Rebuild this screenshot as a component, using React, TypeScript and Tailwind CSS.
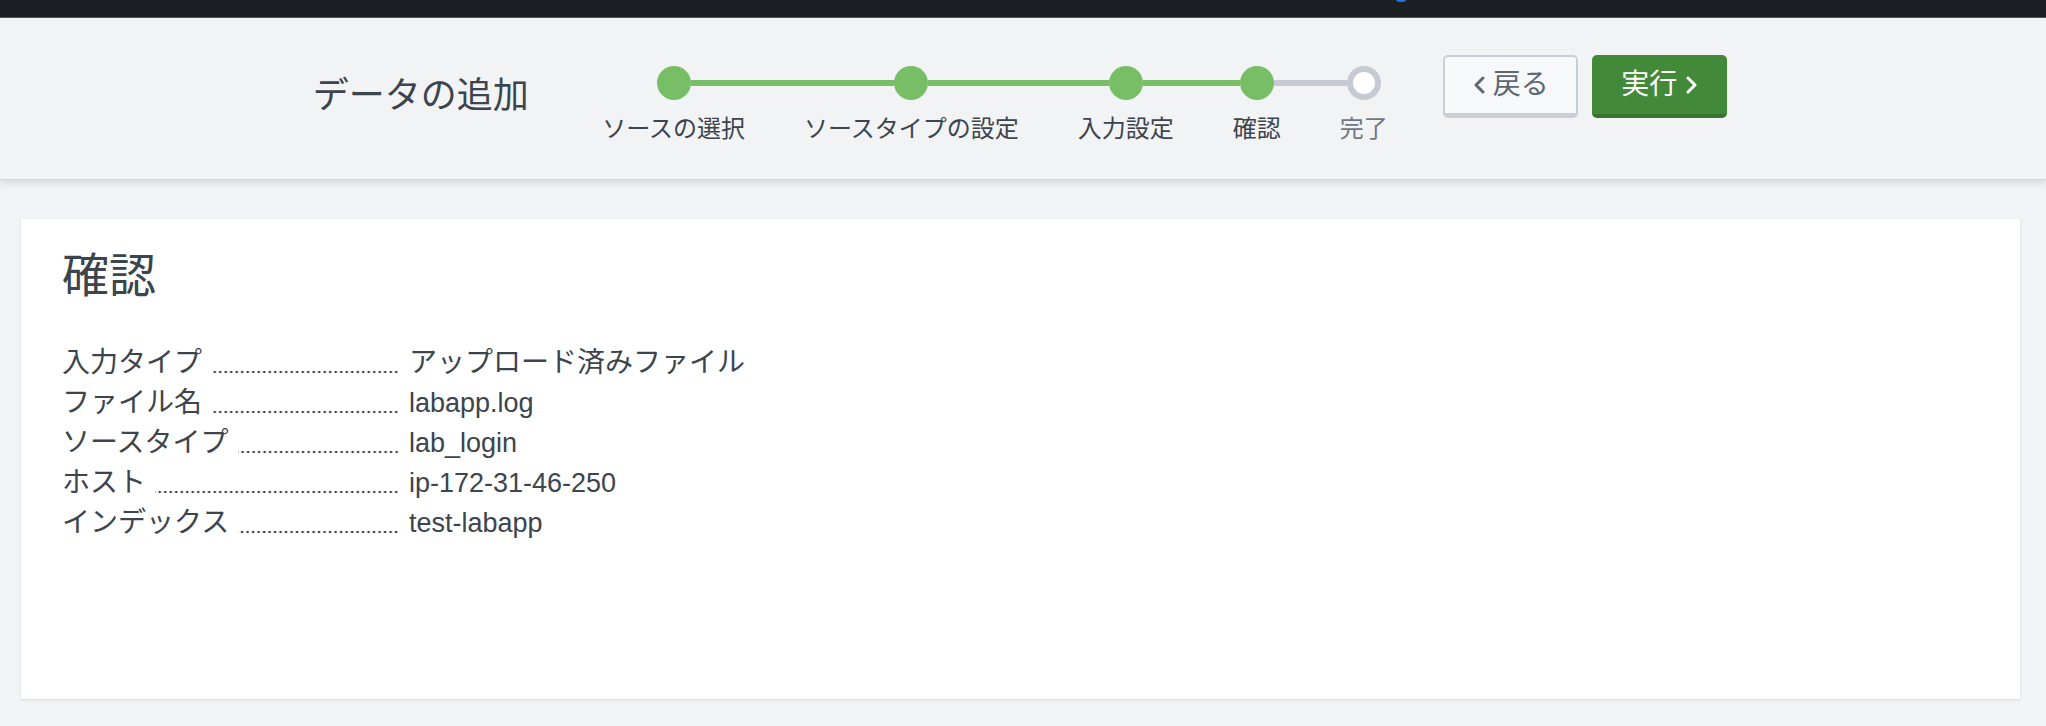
import React from "react";

type Step = { label: string; done: boolean };

const steps: Step[] = [
  { label: "ソースの選択", done: true },
  { label: "ソースタイプの設定", done: true },
  { label: "入力設定", done: true },
  { label: "確認", done: true },
  { label: "完了", done: false },
];

const rows: { k: string; v: string; latin: boolean }[] = [
  { k: "入力タイプ", v: "アップロード済みファイル", latin: false },
  { k: "ファイル名", v: "labapp.log", latin: true },
  { k: "ソースタイプ", v: "lab_login", latin: true },
  { k: "ホスト", v: "ip-172-31-46-250", latin: true },
  { k: "インデックス", v: "test-labapp", latin: true },
];

function StepItem({ step, index }: { step: Step; index: number }) {
  const first = index === 0;
  const last = index === steps.length - 1;
  const leftColor = first ? "bg-transparent" : step.done ? "bg-[#78be67]" : "bg-[#c6cbd3]";
  const next = steps[index + 1];
  const rightColor = last ? "bg-transparent" : next && next.done ? "bg-[#78be67]" : "bg-[#c6cbd3]";
  return (
    <div className="flex flex-col items-stretch">
      <div className="flex h-[34px] items-center">
        <div className={`h-[6px] flex-1 ${leftColor}`} />
        {step.done ? (
          <div className="h-[34px] w-[34px] shrink-0 rounded-full bg-[#78be67]" />
        ) : (
          <div className="h-[34px] w-[34px] shrink-0 rounded-full border-[6px] border-[#c6cbd3] bg-white" />
        )}
        <div className={`h-[6px] flex-1 ${rightColor}`} />
      </div>
      <div
        className={`mt-[14px] px-[29.5px] text-center text-[24px] leading-[30px] whitespace-nowrap ${
          step.done ? "text-[#3c444d]" : "text-[#6f7882]"
        }`}
      >
        {step.label}
      </div>
    </div>
  );
}

export default function App() {
  return (
    <div className="min-h-[726px] bg-[#f2f3f5] font-['Liberation_Sans','Noto_Sans_CJK_JP',sans-serif] text-[#3c444d]">
      {/* top dark bar */}
      <div className="relative h-[18px] overflow-hidden border-b border-[#50555b] bg-[#1b1e22]">
        <span className="absolute left-[1395px] top-[-7px] h-[9px] w-[12px] rounded-full bg-[#2a6fd1]" />
      </div>

      {/* header */}
      <div className="relative z-10 flex h-[162px] items-start justify-center border-b border-[#d3d7dc] bg-[#f2f3f5] pr-[6px] shadow-[0_3px_7px_rgba(60,70,80,0.16)]">
        <div className="mt-[57px] text-[36px] leading-[42px] whitespace-nowrap text-[#3c444d]">
          データの追加
        </div>
        <div className="ml-[44px] mt-[48px] flex">
          {steps.map((s, i) => (
            <StepItem key={s.label} step={s} index={i} />
          ))}
        </div>
        <div className="ml-[26px] mt-[37px] flex gap-[14px]">
          <button className="flex h-[63px] w-[135px] items-center justify-center gap-[8px] rounded-[5px] border-2 border-b-[5px] border-[#c9cfd6] bg-[#f7f8fa] text-[28px] text-[#5c6773]">
            <svg width="12" height="18" viewBox="0 0 12 18" fill="none">
              <polyline points="10,2 3,9 10,16" stroke="#5c6773" strokeWidth="3" strokeLinecap="round" strokeLinejoin="round" />
            </svg>
            <span className="leading-none">戻る</span>
          </button>
          <button className="flex h-[63px] w-[135px] items-center justify-center gap-[9px] rounded-[5px] border-b-[4px] border-[#38742f] bg-[#43893a] text-[28px] text-white">
            <span className="leading-none">実行</span>
            <svg width="12" height="18" viewBox="0 0 12 18" fill="none">
              <polyline points="2,2 9,9 2,16" stroke="#ffffff" strokeWidth="3" strokeLinecap="round" strokeLinejoin="round" />
            </svg>
          </button>
        </div>
      </div>

      {/* card */}
      <div className="ml-[21px] mr-[26px] mt-[39px] h-[480px] bg-white px-[41px] pt-[33px] shadow-[0_1px_2px_rgba(60,70,80,0.15)]">
        <h1 className="text-[47px] leading-[47px] text-[#3c444d]">確認</h1>
        <div className="mt-[44px] flex flex-col">
          {rows.map((r) => (
            <div key={r.k} className="flex h-[40px] items-baseline text-[28px] leading-[40px]">
              <div className="flex h-[40px] w-[337px] shrink-0 items-baseline">
                <span className="shrink-0 whitespace-nowrap">{r.k}</span>
                <span className="ml-[9px] h-[40px] min-w-0 flex-1 self-stretch bg-[radial-gradient(circle,#3c444d_1.1px,transparent_1.6px)] bg-[length:5.5px_4px] bg-[position:right_0_bottom_9px] bg-repeat-x" />
              </div>
              <span className={`ml-[10px] whitespace-nowrap ${r.latin ? "text-[27px]" : "text-[28px]"}`}>
                {r.v}
              </span>
            </div>
          ))}
        </div>
      </div>
    </div>
  );
}
